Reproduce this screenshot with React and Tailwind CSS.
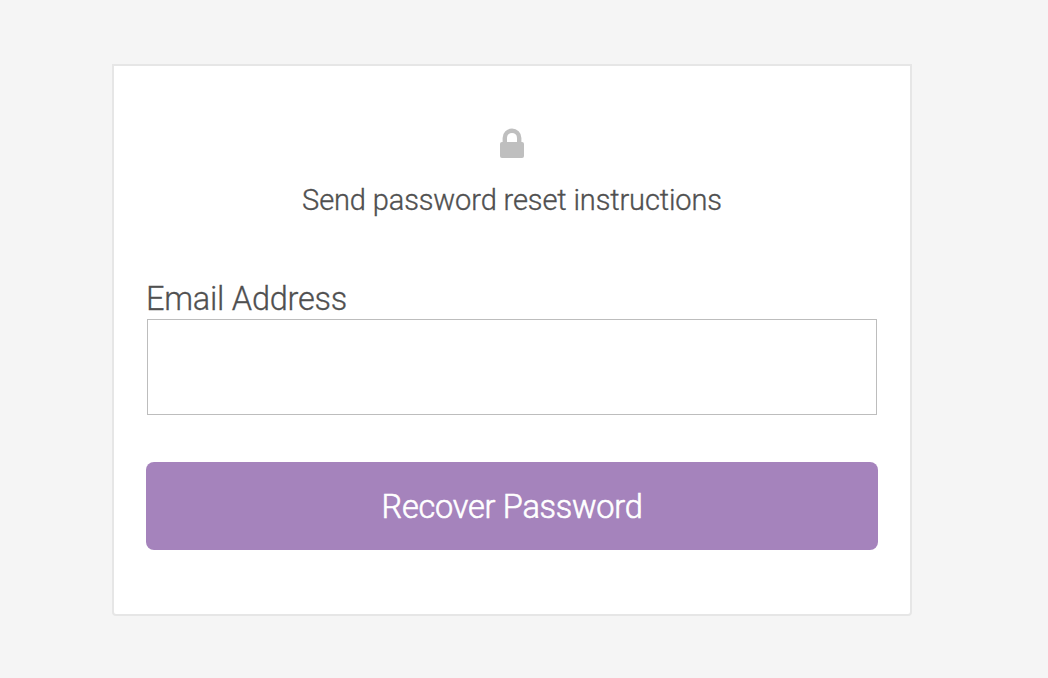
export default function App() {
  return (
    <main className="h-screen overflow-hidden bg-[#f5f5f5] pl-28 pt-16 font-[Roboto,sans-serif] font-light text-[#505050]">
      <form className="flex h-[552px] w-[800px] flex-col rounded-b-[4px] border-2 border-[#e6e6e6] bg-white px-8">
        <header className="flex flex-col items-center pt-[62px]">
          <svg className="h-[30px] w-6" viewBox="0 0 24 30" fill="none">
            <path d="M4.8 15V9.9a7.2 7.2 0 0 1 14.4 0V15" stroke="#bfbfbf" strokeWidth="4.4" />
            <rect y="14" width="24" height="16" rx="2" fill="#bfbfbf" />
          </svg>
          <h1 className="mt-6 whitespace-nowrap text-[29px] leading-9 tracking-[-0.12px] [-webkit-text-stroke:0.35px]">Send password reset instructions</h1>
        </header>
        <label htmlFor="email" className="mt-[62px] text-[32.5px] leading-[39px] tracking-[-0.24px] [-webkit-text-stroke:0.3px]">Email Address</label>
        <input id="email" type="email" className="ml-px h-24 w-[730px] border border-[#bdbdbd] bg-white px-4 outline-none" />
        <button type="button" className="mt-[47px] h-[88px] w-[732px] rounded-lg bg-[#a583bc] pt-0.5 text-[32.5px] tracking-[-0.25px] text-white [-webkit-text-stroke:0.6px]">Recover Password</button>
      </form>
    </main>
  );
}
